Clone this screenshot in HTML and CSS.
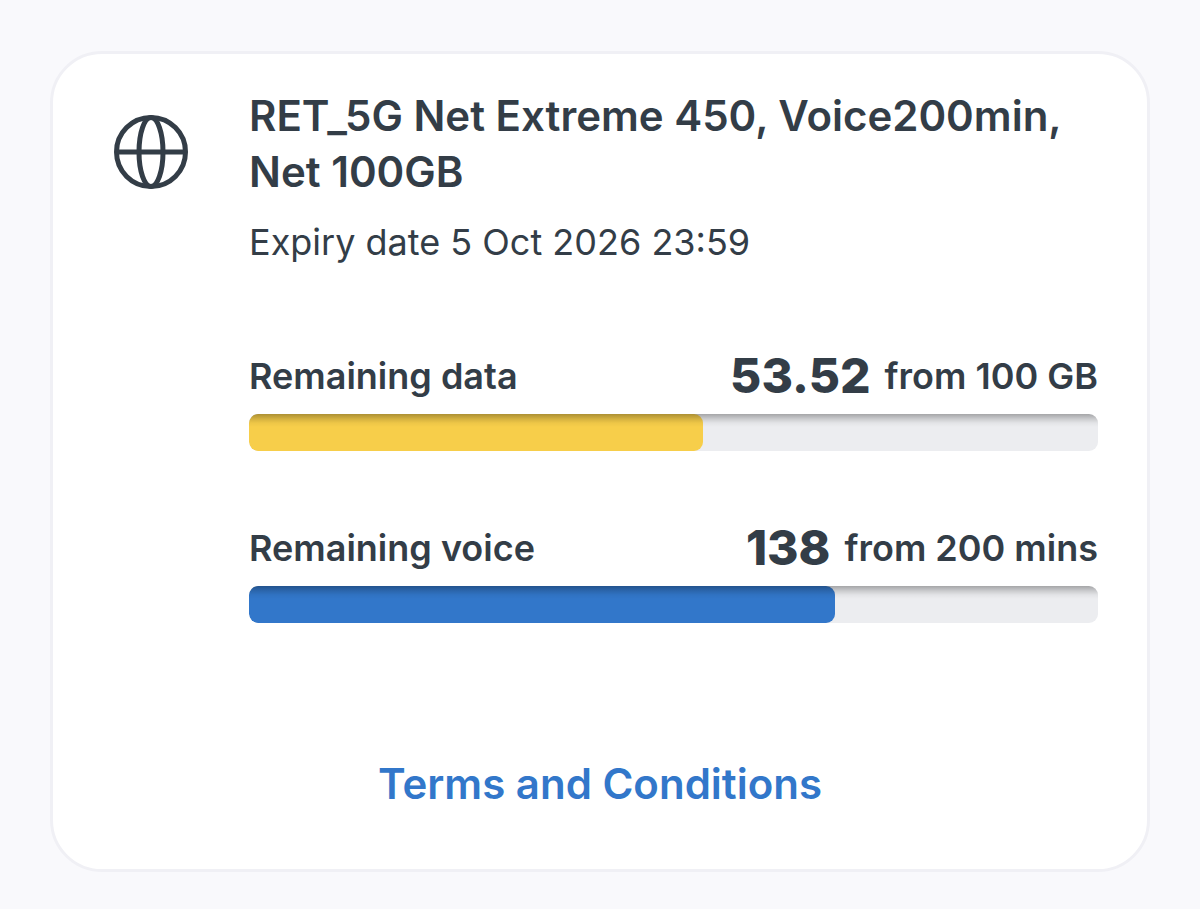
FILE: index.html
```html
<!DOCTYPE html>
<html lang="en">
<head>
  <meta charset="UTF-8">
  <meta name="viewport" content="width=device-width, initial-scale=1.0">
  <title>My Package</title>
  <link rel="stylesheet" href="styles.css">
</head>
<body>
  <main class="card">
    <div class="package">
      <svg class="icon" viewBox="0 0 74 74" aria-hidden="true">
        <circle cx="37" cy="37" r="34.5"/>
        <ellipse cx="37" cy="37" rx="12" ry="34.5"/>
        <path d="M2 37h70"/>
      </svg>
      <div class="details">
        <h1>RET_5G Net Extreme 450, Voice200min, Net 100GB</h1>
        <p class="expiry">Expiry date 5 Oct 2026 23:59</p>

        <section class="usage">
          <div class="usage-row">
            <h2>Remaining data</h2>
            <p><strong>53.52</strong> <span>from 100 GB</span></p>
          </div>
          <div class="bar"><div class="fill data" style="width: 53.52%"></div></div>
        </section>

        <section class="usage">
          <div class="usage-row">
            <h2>Remaining voice</h2>
            <p><strong>138</strong> <span>from 200 mins</span></p>
          </div>
          <div class="bar"><div class="fill voice" style="width: 69%"></div></div>
        </section>
      </div>
    </div>
    <a class="terms" href="#">Terms and Conditions</a>
  </main>
</body>
</html>
```
FILE: styles.css
```css
* {
  box-sizing: border-box;
}
body {
  margin: 0;
  padding: 51px 50px 37px;
  font-family: Inter, sans-serif;
  background-color: #f9f9fc;
  color: #333d47;
}
h1, h2, p {
  margin: 0;
}
.card {
  padding: 34px 0 57px;
  background-color: #fff;
  border: 3px solid #f0f0f5;
  border-radius: 52px;
}
.package {
  display: flex;
  gap: 61px;
  padding: 0 49px 0 61px;
}
.icon {
  flex: none;
  width: 74px;
  height: 74px;
  margin-top: 27px;
  fill: none;
  stroke: #333d47;
  stroke-width: 5;
}
.details {
  flex: 1;
}
h1 {
  font-size: 42px;
  font-weight: 600;
  line-height: 56px;
}
.expiry {
  margin-top: 18px;
  font-size: 36px;
  line-height: 48px;
}
.usage {
  margin-top: 80px;
}
.usage + .usage {
  margin-top: 67px;
}
.usage-row {
  display: flex;
  justify-content: space-between;
  align-items: center;
  line-height: 60px;
}
.usage-row h2, .usage-row p {
  font-size: 36px;
  font-weight: 600;
}
.usage-row p {
  display: flex;
  align-items: center;
  gap: 14px;
}
.usage-row strong {
  font-size: 48px;
  font-weight: 800;
}
.bar {
  position: relative;
  height: 37px;
  margin-top: 8px;
  overflow: hidden;
  background-color: #ecedf0;
  border-radius: 9px;
}
/* shade along the top edge, over both track and fill */
.bar::after {
  content: "";
  position: absolute;
  inset: 0;
  background: linear-gradient(rgba(0, 0, 0, 0.3), rgba(0, 0, 0, 0.14) 5px, rgba(0, 0, 0, 0.04) 9px, transparent 13px);
}
.fill {
  height: 100%;
  border-radius: 9px;
}
.data {
  background-color: #f7ce4a;
}
.voice {
  background-color: #3277ca;
}
.terms {
  display: block;
  width: fit-content;
  margin: 133px auto 0;
  font-size: 42px;
  font-weight: 600;
  line-height: 56px;
  text-decoration: none;
  color: #3277ca;
}
```
